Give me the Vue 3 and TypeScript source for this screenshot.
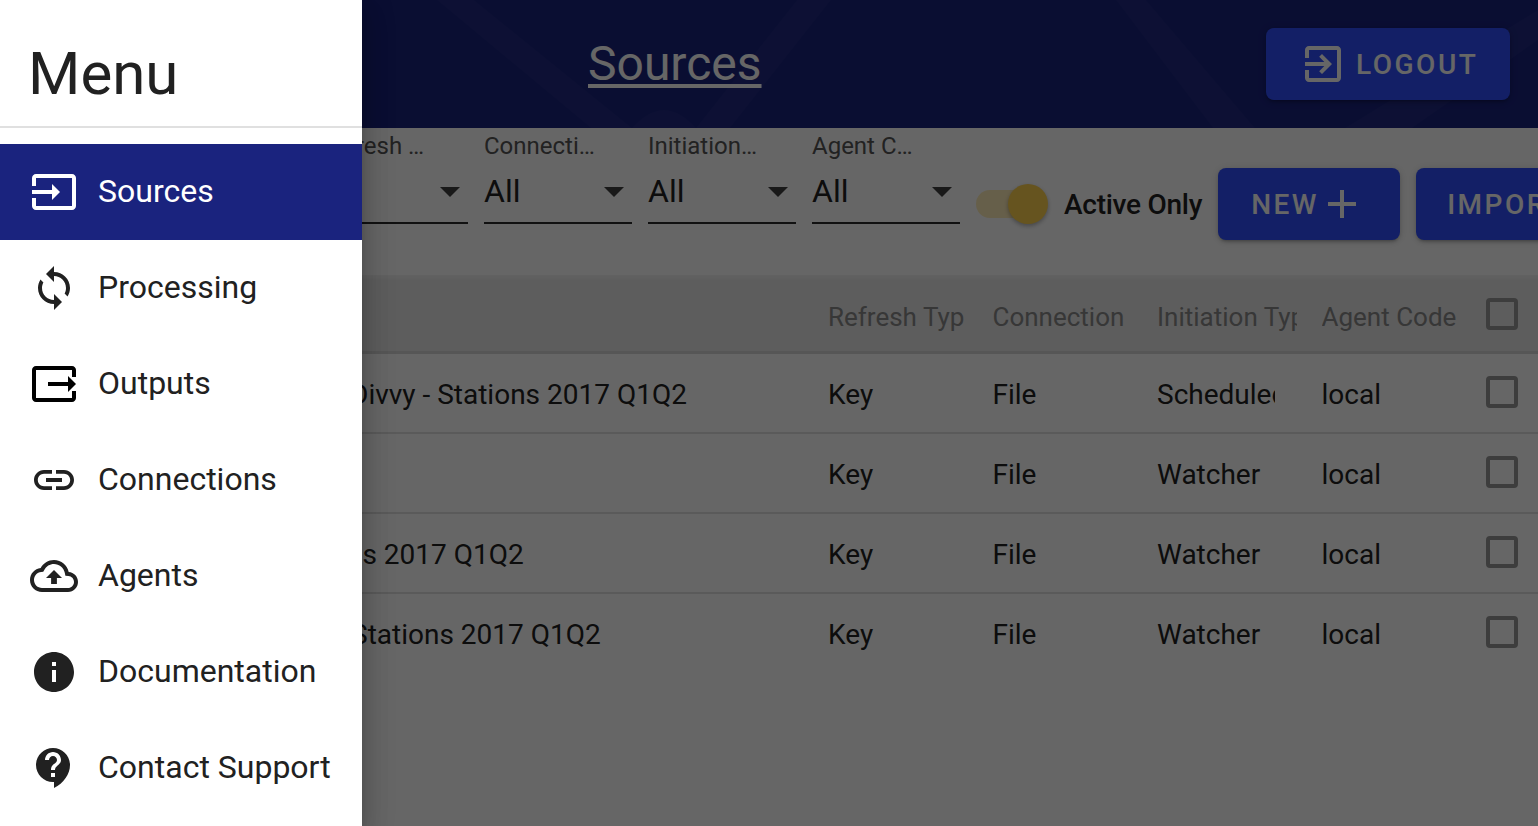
<script setup lang="ts">
import { ref } from 'vue'

interface NavItem {
  label: string
  d: string
  tone?: string
}

const nav = ref<NavItem[]>([
  { label: 'Sources', d: 'M21 3.01H3c-1.1 0-2 .9-2 2V9h2V4.99h18v14.03H3V15H1v4.01c0 1.1.9 1.98 2 1.98h18c1.1 0 2-.88 2-1.98v-14c0-1.11-.9-2-2-2zM11 16l4-4-4-4v3H1v2h10v3z' },
  { label: 'Processing', d: 'M12 4V1L8 5l4 4V6c3.31 0 6 2.69 6 6 0 1.01-.25 1.97-.7 2.8l1.46 1.46C19.54 15.03 20 13.57 20 12c0-4.42-3.58-8-8-8zm0 14c-3.31 0-6-2.69-6-6 0-1.01.25-1.97.7-2.8L5.24 7.74C4.46 8.97 4 10.43 4 12c0 4.42 3.58 8 8 8v3l4-4-4-4v3z' },
  { label: 'Outputs', tone: 'black', d: 'M21 3H3C1.9 3 1 3.9 1 5v14c0 1.1.9 2 2 2h18c1.1 0 2-.9 2-2v-3.5h-2V19H3V5h18v3.5h2V5c0-1.1-.9-2-2-2zM19 8l4 4-4 4v-3H9v-2h10V8z' },
  { label: 'Connections', d: 'M3.9 12c0-1.71 1.39-3.1 3.1-3.1h4V7H7c-2.76 0-5 2.24-5 5s2.24 5 5 5h4v-1.9H7c-1.71 0-3.1-1.39-3.1-3.1zM8 13h8v-2H8v2zm9-6h-4v1.9h4c1.71 0 3.1 1.39 3.1 3.1s-1.39 3.1-3.1 3.1h-4V17h4c2.76 0 5-2.24 5-5s-2.24-5-5-5z' },
  { label: 'Agents', d: 'M19.35 10.04C18.67 6.59 15.64 4 12 4 9.11 4 6.6 5.64 5.35 8.04 2.34 8.36 0 10.91 0 14c0 3.31 2.69 6 6 6h13c2.76 0 5-2.24 5-5 0-2.64-2.05-4.78-4.65-4.96zM19 18H6c-2.21 0-4-1.79-4-4 0-2.05 1.53-3.76 3.56-3.97l1.07-.11.5-.95C8.08 7.14 9.94 6 12 6c2.62 0 4.88 1.86 5.39 4.43l.3 1.5 1.53.11c1.56.1 2.78 1.41 2.78 2.96 0 1.65-1.35 3-3 3zM8 13h2.55v3h2.9v-3H16l-4-4z' },
  { label: 'Documentation', d: 'M12 2C6.48 2 2 6.48 2 12s4.48 10 10 10 10-4.48 10-10S17.52 2 12 2zm1 15h-2v-6h2v6zm0-8h-2V7h2v2z' },
  { label: 'Contact Support', d: 'M11.5 2C6.81 2 3 5.81 3 10.5S6.81 19 11.5 19h.5v3c4.86-2.34 8-7 8-11.5C20 5.81 16.19 2 11.5 2zm1 14.5h-2v-2h2v2zm0-3.5h-2c0-3.25 3-3 3-5 0-1.1-.9-2-2-2s-2 .9-2 2h-2c0-2.21 1.79-4 4-4s4 1.79 4 4c0 2.5-3 2.75-3 5z' }
])

const filters = ref<string[]>(['Source …', 'Refresh …', 'Connecti…', 'Initiation…', 'Agent C…'])

const rows = ref([
  { name: 'Divvy - Stations 2017 Q1Q2', init: 'Scheduled', indent: 350 },
  { name: 'Trips', init: 'Watcher', indent: 300 },
  { name: 'Stations 2017 Q1Q2', init: 'Watcher', indent: 274 },
  { name: 'Stations 2017 Q1Q2', init: 'Watcher', indent: 351 }
])
</script>

<template>
  <div class="page">
    <header class="topbar">
      <svg class="stripes" width="1538" height="128" viewBox="0 0 1538 128" aria-hidden="true">
        <path d="M437 0h37l158 128h-41zM797 0h34L730 128h-34zM632 128q32-36 64 0zM1116 0h30l109 128h-42zM1345 128L1538 10v30l-126 88z" fill="#fff" fill-opacity=".03" />
      </svg>
      <a class="title">Sources</a>
      <button class="btn logout">
        <svg class="ic48" viewBox="0 0 24 24"><path fill="currentColor" d="M10.09 15.59L11.5 17l5-5-5-5-1.41 1.41L12.67 11H3v2h9.67l-2.58 2.59zM19 3H5c-1.11 0-2 .9-2 2v4h2V5h14v14H5v-4H3v4c0 1.1.89 2 2 2h14c1.1 0 2-.9 2-2V5c0-1.1-.9-2-2-2z" /></svg>
        <span>Logout</span>
      </button>
    </header>

    <section class="filters">
      <div v-for="f in filters" :key="f" class="select">
        <div class="select-label">{{ f }}</div>
        <div class="select-value"><span>All</span><i class="caret"></i></div>
      </div>
      <div class="toggle">
        <span class="track"><span class="thumb"></span></span>
        <span class="toggle-label">Active Only</span>
      </div>
      <button class="btn new">
        <span>New</span>
        <svg class="ic48 plus" viewBox="0 0 24 24"><path fill="currentColor" d="M19 13h-6v6h-2v-6H5v-2h6V5h2v6h6v2z" /></svg>
      </button>
      <button class="btn import"><span>Import</span></button>
    </section>

    <section class="table">
      <div class="row head">
        <div class="cell name"></div>
        <div class="cell"><span class="clip">Refresh Type</span></div>
        <div class="cell"><span class="clip">Connection</span></div>
        <div class="cell"><span class="clip">Initiation Type</span></div>
        <div class="cell"><span class="clip">Agent Code</span></div>
        <div class="cell check"><i class="box"></i></div>
      </div>
      <div v-for="r in rows" :key="r.indent" class="row">
        <div class="cell name" :style="{ paddingLeft: r.indent + 'px' }">{{ r.name }}</div>
        <div class="cell"><span class="clip">Key</span></div>
        <div class="cell"><span class="clip">File</span></div>
        <div class="cell"><span class="clip">{{ r.init }}</span></div>
        <div class="cell"><span class="clip">local</span></div>
        <div class="cell check"><i class="box"></i></div>
      </div>
    </section>

    <div class="overlay"></div>

    <aside class="drawer">
      <h1 class="menu-title">Menu</h1>
      <nav class="nav">
        <a v-for="(n, i) in nav" :key="n.label" class="nav-item" :class="{ active: i === 0 }">
          <svg class="ic48" :class="n.tone" viewBox="0 0 24 24"><path fill="currentColor" :d="n.d" /></svg>
          <span class="nav-text">{{ n.label }}</span>
        </a>
      </nav>
    </aside>
  </div>
</template>

<style>
html, body { margin: 0; overflow: hidden; }
</style>

<style scoped>
.page {
  position: relative;
  width: 1538px;
  height: 826px;
  overflow: hidden;
  background: #fff;
  font-family: Roboto, "Liberation Sans", sans-serif;
  color: #212121;
}
.ic48 { width: 48px; height: 48px; flex: none; display: block; }
.topbar {
  position: relative;
  height: 128px;
  background: #1a237e;
  display: flex;
  align-items: center;
  justify-content: flex-end;
  padding-right: 28px;
  box-sizing: border-box;
}
.stripes { position: absolute; left: 0; top: 0; }
.title {
  position: absolute;
  left: 588px;
  top: 32px;
  color: #fff;
  font-size: 48px;
  line-height: 64px;
  text-decoration: underline;
  text-decoration-thickness: 4px;
  text-underline-offset: 4px;
}
.btn {
  position: relative;
  height: 72px;
  border: 0;
  border-radius: 8px;
  background: #304ffe;
  color: #fff;
  font: 500 28px Roboto, sans-serif;
  letter-spacing: 2.5px;
  text-transform: uppercase;
  display: flex;
  align-items: center;
  flex: none;
  box-shadow: 0 3px 3px -2px rgba(0,0,0,.2), 0 2px 4px rgba(0,0,0,.14), 0 1px 10px rgba(0,0,0,.12);
  padding: 0;
}
.logout { width: 244px; padding-left: 33px; gap: 9px; }
.filters {
  height: 147px;
  box-sizing: border-box;
  display: flex;
  padding-left: 156px;
  gap: 16px;
}
.select { width: 148px; flex: none; }
.select-label {
  font-size: 24px;
  line-height: 36px;
  color: #555;
  white-space: nowrap;
}
.select-value {
  height: 60px;
  box-sizing: border-box;
  border-bottom: 2px solid #2b2b2b;
  display: flex;
  align-items: center;
  justify-content: space-between;
  font-size: 32px;
  padding-right: 8px;
  padding-bottom: 5px;
}
.caret {
  width: 0;
  height: 0;
  border-left: 10px solid transparent;
  border-right: 10px solid transparent;
  border-top: 10px solid rgba(0,0,0,.75);
  margin-top: 2px;
}
.toggle {
  display: flex;
  align-items: center;
  height: 72px;
  margin-top: 40px;
  gap: 16px;
}
.track {
  position: relative;
  display: block;
  width: 56px;
  height: 28px;
  border-radius: 14px;
  background: rgba(255,210,80,.4);
}
.thumb {
  position: absolute;
  right: -16px;
  top: -6px;
  width: 40px;
  height: 40px;
  border-radius: 50%;
  background: #ffd24f;
  box-shadow: 0 2px 4px rgba(0,0,0,.3);
}
.toggle-label {
  font-size: 28px;
  font-weight: 500;
  letter-spacing: -.26px;
  margin-left: 16px;
  white-space: nowrap;
}
.new { width: 182px; margin-top: 40px; padding-left: 33px; }
.plus { margin-left: -1px; }
.import { width: 200px; margin-top: 40px; padding-left: 31px; }
.row {
  display: grid;
  grid-template-columns: 828px 164.5px 164.5px 164.5px 164.5px 1fr;
  height: 80px;
  border-bottom: 2px solid #e0e0e0;
  box-sizing: border-box;
  align-items: center;
  font-size: 28px;
}
.row:last-child { border-bottom-color: transparent; }
.row.head {
  height: 79px;
  background: linear-gradient(#f4f4f4, #e8e8e8 6px);
  border-bottom: 3px solid #d8d8d8;
  color: #8a8a8a;
  font-size: 26px;
}
.cell { white-space: nowrap; overflow: hidden; line-height: 36px; }
.cell.name { padding-top: 4px; overflow: visible; }
.clip { display: block; width: 118px; overflow: hidden; padding-top: 4px; }
.head .clip { width: 140px; padding-top: 7px; }
.head .cell:nth-child(2) .clip { width: 136px; }
.check { display: flex; overflow: visible; }
.box {
  display: block;
  width: 32px;
  height: 32px;
  box-sizing: border-box;
  border: 4px solid #999;
  border-radius: 4px;
  margin-top: -2px;
}
.head .box { margin-top: 2px; }
.overlay {
  position: absolute;
  inset: 0;
  background: rgba(0,0,0,.6);
}
.drawer {
  position: absolute;
  left: 0;
  top: 0;
  bottom: 0;
  width: 362px;
  background: #fff;
  box-shadow: 0 8px 10px -5px rgba(0,0,0,.2), 0 16px 24px 2px rgba(0,0,0,.14), 0 6px 30px 5px rgba(0,0,0,.12);
}
.menu-title {
  margin: 0;
  height: 128px;
  box-sizing: border-box;
  border-bottom: 2px solid #e0e0e0;
  padding: 38px 0 0 28px;
  font-size: 60px;
  font-weight: 400;
  line-height: 72px;
  color: #212121;
}
.nav { padding-top: 16px; }
.nav-item {
  height: 96px;
  display: flex;
  align-items: center;
  padding-left: 30px;
  gap: 20px;
  font-size: 32px;
  color: #212121;
}
.nav-text { padding-bottom: 2px; }
.nav-item.active { background: #1a237e; color: #fff; }
.black { color: #000; }
</style>
